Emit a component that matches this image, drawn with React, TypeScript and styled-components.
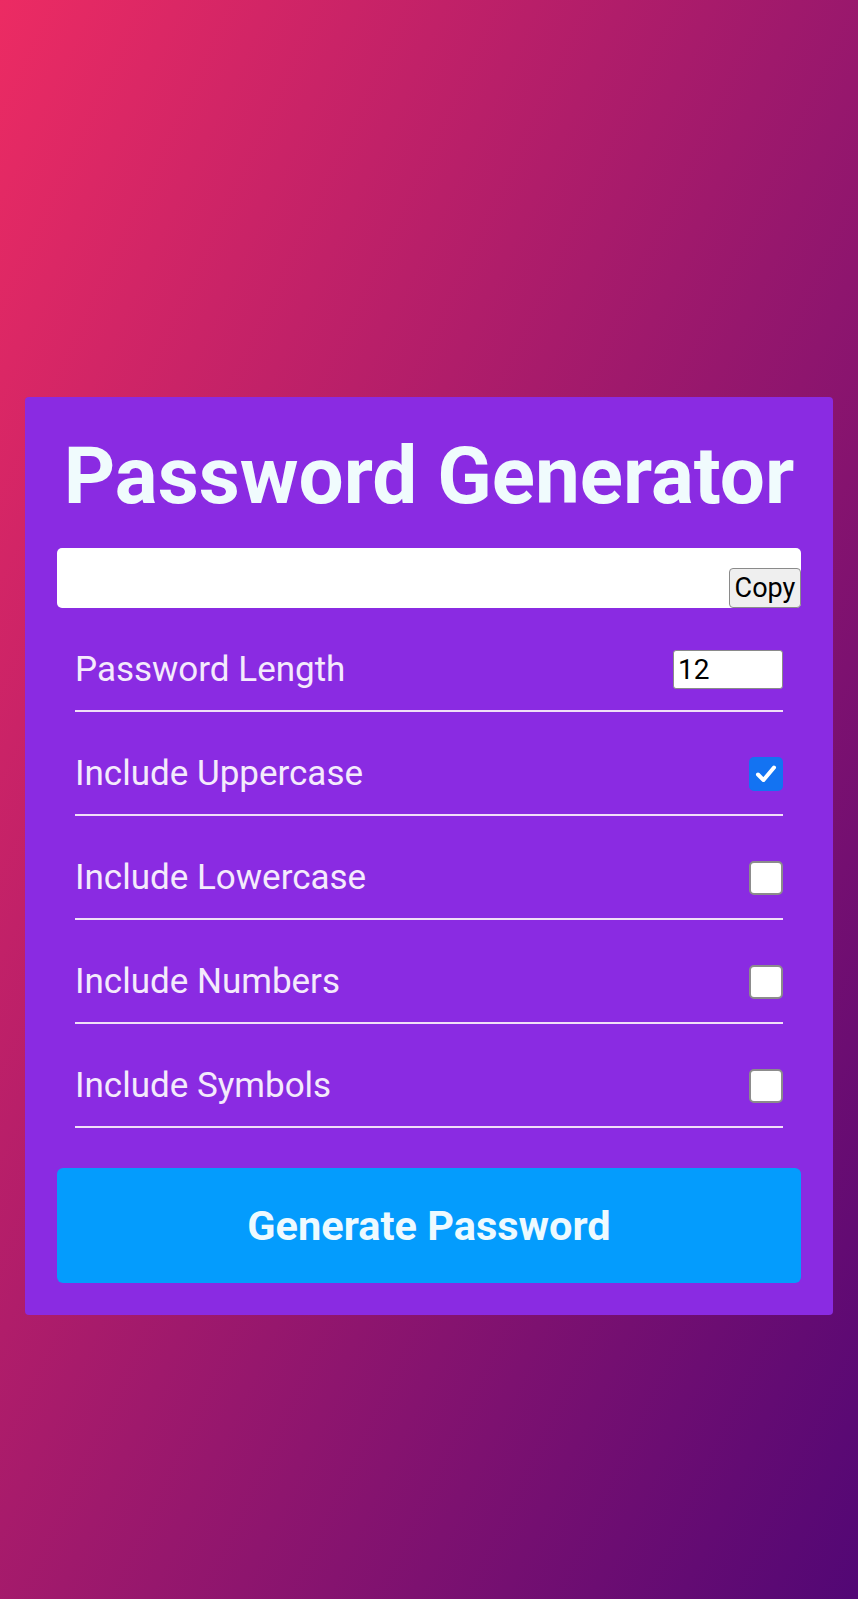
import styled, { createGlobalStyle } from 'styled-components';

const GlobalStyle = createGlobalStyle`
    body {
        margin: 0;
        font-family: Roboto, "Liberation Sans", sans-serif;
    }
`;

const Page = styled.div`
    min-height: 1599px;
    box-sizing: border-box;
    padding: 397px 25px 0;
    display: flex;
    justify-content: center;
    align-items: flex-start;
    background: linear-gradient(115deg, #ec2b63 0%, #520775 100%);
`;

const Card = styled.div`
    width: 100%;
    box-sizing: border-box;
    padding: 32px;
    background-color: #8a2be2;
    border-radius: 4px;
`;

const Title = styled.h1`
    margin: 0 0 25px;
    font-size: 80px;
    font-weight: 700;
    line-height: normal;
    text-align: center;
    white-space: nowrap;
    color: #f0fbfd;
`;

const ResultBox = styled.div`
    height: 60px;
    display: flex;
    justify-content: flex-end;
    align-items: flex-end;
    background-color: #ffffff;
    border-radius: 5px;
`;

const CopyButton = styled.button`
    height: 40px;
    width: 72px;
    padding: 0;
    font-family: Roboto, "Liberation Sans", sans-serif;
    font-size: 27px;
    color: #000;
    background-color: #efefef;
    border: 1.5px solid #8a8a8a;
    border-radius: 4px;
`;

const Settings = styled.div`
    margin: 2px 18px 0;
`;

const Row = styled.div`
    display: flex;
    justify-content: space-between;
    align-items: center;
    margin-top: 21px;
    padding: 20px 0;
    border-bottom: 2px solid #f1dff8;
`;

const Label = styled.span`
    font-size: 35px;
    line-height: 41px;
    color: #f4eafc;
`;

const LengthInput = styled.div`
    width: 110px;
    height: 39px;
    box-sizing: border-box;
    padding-left: 4px;
    display: flex;
    align-items: center;
    font-size: 28px;
    color: #000;
    background-color: #ffffff;
    border: 1.5px solid #8a8a8a;
    border-radius: 3px;
`;

const CheckBox = styled.div<{ checked?: boolean }>`
    width: 34px;
    height: 34px;
    box-sizing: border-box;
    display: flex;
    align-items: center;
    justify-content: center;
    border-radius: 5px;
    background-color: ${props => (props.checked ? '#1373f2' : '#ffffff')};
    border: ${props => (props.checked ? 'none' : '2px solid #8c8c8c')};
`;

const GenerateButton = styled.button`
    width: 100%;
    height: 115px;
    margin-top: 40px;
    border: none;
    border-radius: 6px;
    background-color: #049cfd;
    color: #eefaff;
    font-family: Roboto, "Liberation Sans", sans-serif;
    font-size: 41.5px;
    font-weight: 700;
`;

function Check({ checked }: { checked?: boolean }): JSX.Element {
    return (
        <CheckBox checked={checked}>
            {checked && (
                <svg width="24" height="24" viewBox="0 0 24 24">
                    <path d="M4 12.5 L9.5 18 L20 5.5" fill="none" stroke="#fff" strokeWidth="4" strokeLinecap="round" strokeLinejoin="round" />
                </svg>
            )}
        </CheckBox>
    );
}

const options = [
    { label: 'Include Uppercase', checked: true },
    { label: 'Include Lowercase', checked: false },
    { label: 'Include Numbers', checked: false },
    { label: 'Include Symbols', checked: false },
];

export default function App(): JSX.Element {
    return (
        <>
            <GlobalStyle />
            <Page>
                <Card>
                    <Title>Password Generator</Title>
                    <ResultBox>
                        <CopyButton>Copy</CopyButton>
                    </ResultBox>
                    <Settings>
                        <Row>
                            <Label>Password Length</Label>
                            <LengthInput>12</LengthInput>
                        </Row>
                        {options.map(o => (
                            <Row key={o.label}>
                                <Label>{o.label}</Label>
                                <Check checked={o.checked} />
                            </Row>
                        ))}
                    </Settings>
                    <GenerateButton>Generate Password</GenerateButton>
                </Card>
            </Page>
        </>
    );
}
